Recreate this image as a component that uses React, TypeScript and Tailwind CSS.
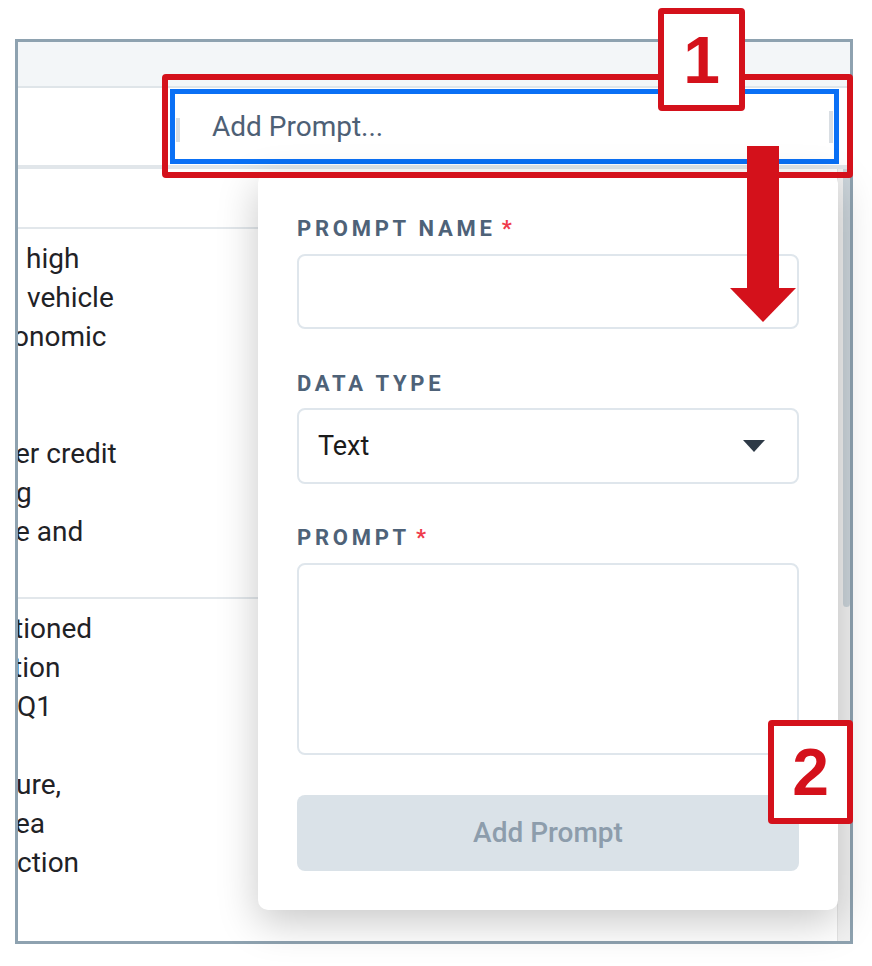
import React from "react";

const row1: [string, string][] = [
  ["ml-[8px]", "high"],
  ["ml-[9px]", "vehicle"],
  ["ml-[-5px]", "onomic"],
  ["", "\u00a0"],
  ["", "\u00a0"],
  ["ml-[-3px]", "er credit"],
  ["ml-[-2px]", "g"],
  ["ml-[-3px]", "e and"],
];

const row2: [string, string][] = [
  ["ml-[-4px]", "tioned"],
  ["ml-[-5px]", "tion"],
  ["ml-[-1px]", "Q1"],
  ["", "\u00a0"],
  ["ml-[-2px]", "ure,"],
  ["ml-[-3px]", "ea"],
  ["ml-[-1px]", "ction"],
];

function Label({ text, required }: { text: string; required?: boolean }) {
  return (
    <div className="h-[28px] leading-[28px] text-[22px] font-bold tracking-[0.17em] text-[#4e6278] flex whitespace-nowrap">
      <span>{text}</span>
      {required && <span className="text-[#ef3b4b] ml-[6px]">*</span>}
    </div>
  );
}

export default function App() {
  return (
    <div className="relative w-[872px] h-[966px] bg-white overflow-hidden font-['Roboto',sans-serif]">
      <div className="pt-[39px] pl-[15px]">
        <div className="w-[838px] h-[905px] border-[3px] border-[#8ea2b0] overflow-hidden flex flex-col">
          <div className="h-[44px] shrink-0 bg-[#f3f6f8]" />
          <div className="h-[2px] shrink-0 bg-[#dfe5e9]" />
          <div className="h-[77px] shrink-0 flex items-center pl-[152px] pr-[11px] bg-white">
            <div className="relative flex-1 h-[75px] border-[5px] border-[#0a70f5] bg-white flex items-center pl-[37px] text-[28px] text-[#4e6075]">
              Add Prompt...
              <div className="absolute left-[1px] top-[24px] w-[4px] h-[24px] bg-[#d9dee3]" />
              <div className="absolute right-[1px] top-[17px] w-[4px] h-[32px] bg-[#d9dee3]" />
            </div>
          </div>
          <div className="h-[4px] shrink-0 bg-[#e1e6ea]" />
          <div className="flex flex-1 min-h-0">
            <div className="flex-1 flex flex-col text-[28px] leading-[39px] text-[#1f2226] whitespace-nowrap">
              <div className="h-[58px] shrink-0" />
              <div className="h-[2px] shrink-0 bg-[#e2e7eb]" />
              <div className="h-[368px] shrink-0 pt-[10px]">
                {row1.map(([c, t], i) => (
                  <div key={i} className={c}>{t}</div>
                ))}
              </div>
              <div className="h-[2px] shrink-0 bg-[#e2e7eb]" />
              <div className="flex-1 pt-[10px]">
                {row2.map(([c, t], i) => (
                  <div key={i} className={c}>{t}</div>
                ))}
              </div>
            </div>
            <div className="w-[13px] shrink-0 border-l border-[#e3e3e3] bg-[#f1f1f1] flex justify-end">
              <div className="w-[7px] h-[438px] bg-[#cbd4da] rounded-b-[6px]" />
            </div>
          </div>
        </div>
      </div>

      {/* Popover */}
      <div className="absolute left-[258px] top-[173px] w-[580px] h-[737px] bg-white rounded-[10px] shadow-[0_12px_40px_rgba(0,0,0,0.22)] px-[39px] pt-[42px] flex flex-col">
        <Label text="PROMPT NAME" required />
        <div className="mt-[11px] h-[75px] border-2 border-[#dfe6ec] rounded-[8px]" />
        <div className="mt-[41px]">
          <Label text="DATA TYPE" />
        </div>
        <div className="mt-[10px] h-[76px] border-2 border-[#dfe6ec] rounded-[8px] flex items-center justify-between pl-[19px] pr-[32px]">
          <span className="text-[27px] text-[#1b1b1b]">Text</span>
          <svg width="22" height="12" viewBox="0 0 22 12">
            <polygon points="0,0 22,0 11,12" fill="#2e3a47" />
          </svg>
        </div>
        <div className="mt-[40px]">
          <Label text="PROMPT" required />
        </div>
        <div className="mt-[11px] h-[192px] border-2 border-[#dfe6ec] rounded-[8px]" />
        <div className="mt-[40px] h-[76px] bg-[#dae2e8] rounded-[8px] flex items-center justify-center text-[28px] font-medium text-[#8d9dac]">
          Add Prompt
        </div>
      </div>

      {/* Annotations */}
      <div className="absolute left-[162px] top-[74px] w-[691px] h-[104px] border-[6px] border-[#d4111b] rounded-[4px]" />
      <svg className="absolute left-[730px] top-[146px]" width="66" height="177" viewBox="0 0 66 177">
        <rect x="17" y="0" width="32" height="143" fill="#d4111b" />
        <polygon points="0,142 66,142 33,176" fill="#d4111b" />
      </svg>
      <div className="absolute left-[658px] top-[8px] w-[87px] h-[103px] border-[6px] border-[#d4111b] rounded-[4px] bg-white flex items-center justify-center">
        <span className="font-['Liberation_Sans',sans-serif] font-bold text-[66px] leading-none text-[#d4111b]">1</span>
      </div>
      <div className="absolute left-[768px] top-[720px] w-[85px] h-[104px] border-[6px] border-[#d4111b] rounded-[4px] bg-white flex items-center justify-center">
        <span className="font-['Liberation_Sans',sans-serif] font-bold text-[66px] leading-none text-[#d4111b]">2</span>
      </div>
    </div>
  );
}
